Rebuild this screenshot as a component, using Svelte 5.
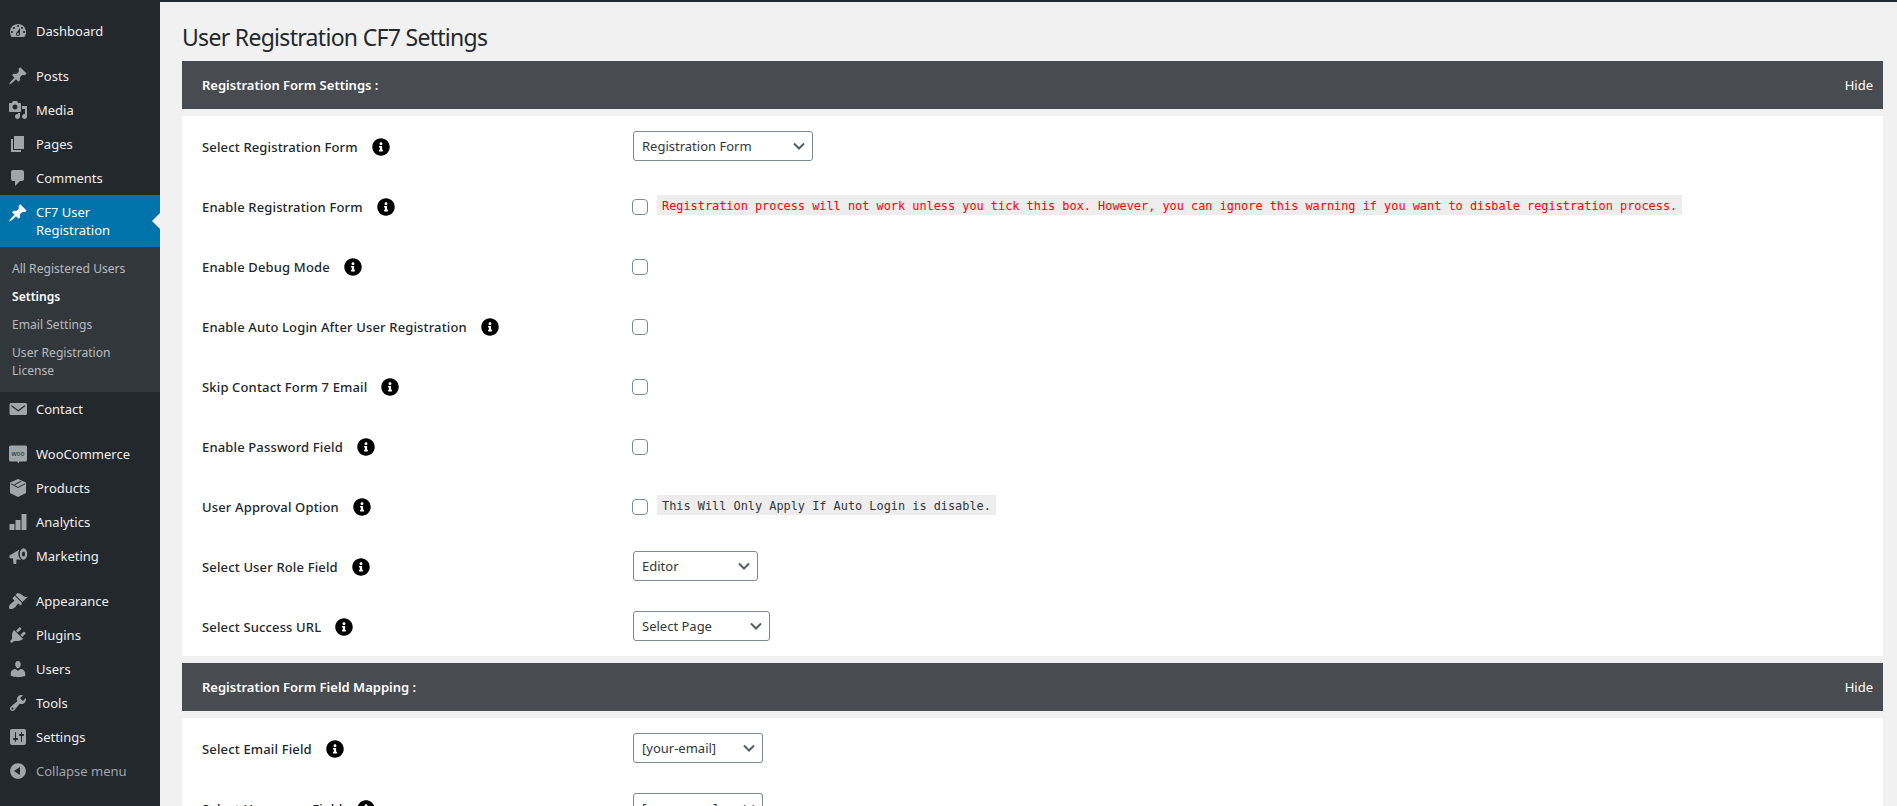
<script>
	const pin = 'M10.44 3.02l1.82-1.82 6.36 6.35-1.83 1.82c-1.05-.68-2.48-.57-3.41.36l-.75.75c-.92.93-1.04 2.35-.35 3.41l-1.83 1.82-2.41-2.41-2.8 2.79c-.42.42-3.38 2.71-3.8 2.29s1.86-3.39 2.28-3.81l2.79-2.79L4.1 9.36l1.83-1.82c1.05.69 2.48.57 3.4-.36l.75-.75c.93-.92 1.05-2.35.36-3.41z'
	const icons = {
		dashboard: 'M3.76 16h12.48c1.1-1.37 1.76-3.11 1.76-5 0-4.42-3.58-8-8-8s-8 3.58-8 8c0 1.89.66 3.63 1.76 5zM10 4c.55 0 1 .45 1 1s-.45 1-1 1-1-.45-1-1 .45-1 1-1zM6 6c.55 0 1 .45 1 1s-.45 1-1 1-1-.45-1-1 .45-1 1-1zm8 0c.55 0 1 .45 1 1s-.45 1-1 1-1-.45-1-1 .45-1 1-1zm-5.37 5.55L12 7v6c0 1.1-.9 2-2 2s-2-.9-2-2c0-.57.24-1.08.63-1.45zM4 10c.55 0 1 .45 1 1s-.45 1-1 1-1-.45-1-1 .45-1 1-1zm12 0c.55 0 1 .45 1 1s-.45 1-1 1-1-.45-1-1 .45-1 1-1zm-5 3c0-.55-.45-1-1-1s-1 .45-1 1 .45 1 1 1 1-.45 1-1z',
		pin,
		media: 'M13 11V4c0-.55-.45-1-1-1h-1.67L9 1H5L3.67 3H2c-.55 0-1 .45-1 1v7c0 .55.45 1 1 1h10c.55 0 1-.45 1-1zM7 4.5c1.38 0 2.5 1.12 2.5 2.5S8.38 9.5 7 9.5 4.5 8.38 4.5 7 5.62 4.5 7 4.5zM14 6h5v10.5c0 1.38-1.12 2.5-2.5 2.5S14 17.88 14 16.5s1.12-2.5 2.5-2.5c.17 0 .34.02.5.05V9h-3V6zm-4 8.05V13h2v3.5c0 1.38-1.12 2.5-2.5 2.5S7 17.88 7 16.5 8.12 14 9.5 14c.17 0 .34.02.5.05z',
		page: 'M6 15V2h10v13H6zm-1 1h8v2H3V5h2v11z',
		comments: 'M5 2h9c1.1 0 2 .9 2 2v7c0 1.1-.9 2-2 2h-2l-5 5v-5H5c-1.1 0-2-.9-2-2V4c0-1.1.9-2 2-2z',
		mail: 'M3 4h14.5c.8 0 1.5.7 1.5 1.5v9c0 .8-.7 1.5-1.5 1.5H3c-.8 0-1.5-.7-1.5-1.5v-9C1.5 4.7 2.2 4 3 4zM3.5 6l6.7 5 6.8-5v1.5l-6.8 5-6.7-5z',
		products: 'M10 1l8 3.5V15l-8 4-8-4V4.5zM2.8 5.3L10 9l7.2-3.7v.9L10 10 2.8 6.2zM12.5 3.1L6 6.4l1.1.5 6.5-3.3z',
		analytics: 'M1.5 12h5v6h-5zM7.5 8h5v10h-5zM13.5 2h5v16h-5z',
		marketing: 'M1.5 9.5L11.5 3.5C10.5 5 10 7 10.5 9.5c.4 2 1.4 3.5 2.7 4.3L8.500 13.500 8.2 18H5.5L5 12.500 2.5 12.200C1.5 12 1 11 1.5 9.5zM15.5 2.3a3.7 5.7 0 0 1 0 11.4a3.7 5.7 0 0 1 0-11.4zM15.5 5.5a1.6 2.5 0 0 0 0 5a1.6 2.5 0 0 0 0-5z',
		brush: 'M14.48 11.06L7.41 3.99l1.5-1.5c.5-.56 2.3-.47 3.51.32 1.21.8 1.43 1.28 2.91 2.1 1.18.64 2.45 1.26 4.45.85zm-.71.71L6.7 4.7 4.93 6.47c-.39.39-.39 1.02 0 1.41l1.06 1.06c.39.39.39 1.03 0 1.42-.6.6-1.43 1.11-2.21 1.69-.35.26-.7.53-1.01.84C1.43 13.23.99 15.02 1 16.5c0 .91.39 1.5 1.5 1.5 1.48.01 3.27-.43 4.61-1.77.31-.31.58-.66.84-1.01.58-.78 1.09-1.61 1.69-2.21.39-.39 1.03-.39 1.42 0l1.06 1.06c.39.39 1.02.39 1.41 0z',
		plugins: 'M13.11 4.36L9.87 7.6 8 5.73l3.24-3.24c.35-.34 1.05-.2 1.56.32.52.51.66 1.21.31 1.55zm-8 1.77l.91-1.12 9.01 9.01-1.19.84c-.71.71-2.63 1.16-3.82 1.16H6.14L4.9 17.26c-.59.59-1.54.59-2.12 0-.59-.58-.59-1.53 0-2.12l1.24-1.24v-3.88c0-1.13.4-3.19 1.09-3.89zm7.26 3.97l3.24-3.24c.34-.35 1.04-.21 1.55.31.52.51.66 1.21.31 1.55l-3.24 3.25z',
		users: 'M10 9.25c-2.27 0-2.73-3.44-2.73-3.44C7 4.02 7.82 2 9.97 2c2.16 0 2.98 2.02 2.71 3.81 0 0-.41 3.44-2.68 3.44zm0 2.57L12.72 10c2.39 0 4.52 2.33 4.52 4.53v2.49s-3.65 1.13-7.24 1.13c-3.65 0-7.24-1.13-7.24-1.13v-2.49c0-2.25 1.94-4.48 4.47-4.48z',
		tools: 'M16.68 9.77c-1.34 1.34-3.3 1.67-4.95.99l-5.41 6.52c-.99.99-2.59.99-3.58 0s-.99-2.59 0-3.57l6.52-5.42c-.68-1.65-.35-3.61.99-4.95 1.28-1.28 3.12-1.62 4.72-1.06l-2.89 2.89 2.82 2.82 2.86-2.87c.53 1.58.18 3.39-1.08 4.65zM3.81 16.21c.4.39 1.04.39 1.43 0 .4-.4.4-1.04 0-1.43-.39-.4-1.03-.4-1.43 0-.39.39-.39 1.03 0 1.43z',
		settings: 'M18 16V4c0-1.1-.9-2-2-2H4c-1.1 0-2 .9-2 2v12c0 1.1.9 2 2 2h12c1.1 0 2-.9 2-2zM8 11h1c.55 0 1 .45 1 1s-.45 1-1 1H8v1.5c0 .28-.22.5-.5.5s-.5-.22-.5-.5V13H6c-.55 0-1-.45-1-1s.45-1 1-1h1V5.5c0-.28.22-.5.5-.5s.5.22.5.5V11zm5-2h-1c-.55 0-1-.45-1-1s.45-1 1-1h1V5.5c0-.28.22-.5.5-.5s.5.22.5.5V7h1c.55 0 1 .45 1 1s-.45 1-1 1h-1v5.5c0 .28-.22.5-.5.5s-.5-.22-.5-.5V9z',
		collapse: 'M10 2.16c4.33 0 7.84 3.51 7.84 7.84s-3.51 7.84-7.84 7.84S2.16 14.33 2.16 10 5.67 2.16 10 2.16zM12 14V6l-6 4z'
	}
	const info = 'M256 8C119.043 8 8 119.083 8 256c0 136.997 111.043 248 248 248s248-111.003 248-248C504 119.083 392.957 8 256 8zm0 110c23.196 0 42 18.804 42 42s-18.804 42-42 42-42-18.804-42-42 18.804-42 42-42zm56 254c0 6.627-5.373 12-12 12h-88c-6.627 0-12-5.373-12-12v-24c0-6.627 5.373-12 12-12h12v-64h-12c-6.627 0-12-5.373-12-12v-24c0-6.627 5.373-12 12-12h64c6.627 0 12 5.373 12 12v100h12c6.627 0 12 5.373 12 12v24z'

	const menuTop = [{ name: 'Dashboard', icon: 'dashboard' }]
	const menuA = [
		{ name: 'Posts', icon: 'pin' },
		{ name: 'Media', icon: 'media' },
		{ name: 'Pages', icon: 'page' },
		{ name: 'Comments', icon: 'comments' }
	]
	const subItems = ['All Registered Users', 'Settings', 'Email Settings', 'User Registration License']
	const menuB = [
		{ name: 'WooCommerce', icon: 'woo' },
		{ name: 'Products', icon: 'products' },
		{ name: 'Analytics', icon: 'analytics' },
		{ name: 'Marketing', icon: 'marketing' }
	]
	const menuC = [
		{ name: 'Appearance', icon: 'brush' },
		{ name: 'Plugins', icon: 'plugins' },
		{ name: 'Users', icon: 'users' },
		{ name: 'Tools', icon: 'tools' },
		{ name: 'Settings', icon: 'settings' }
	]

	const formRows = [
		{ label: 'Select Registration Form', select: 'Registration Form', width: 180 },
		{ label: 'Enable Registration Form', check: true, note: 'Registration process will not work unless you tick this box. However, you can ignore this warning if you want to disbale registration process.', red: true },
		{ label: 'Enable Debug Mode', check: true },
		{ label: 'Enable Auto Login After User Registration', check: true },
		{ label: 'Skip Contact Form 7 Email', check: true },
		{ label: 'Enable Password Field', check: true },
		{ label: 'User Approval Option', check: true, note: 'This Will Only Apply If Auto Login is disable.' },
		{ label: 'Select User Role Field', select: 'Editor', width: 125 },
		{ label: 'Select Success URL', select: 'Select Page', width: 137 }
	]
	const mapRows = [
		{ label: 'Select Email Field', select: '[your-email]', width: 130 },
		{ label: 'Select Username Field', select: '[your-name]', width: 130 }
	]
</script>

{#snippet icon(name)}
	{#if name === 'woo'}
		<svg class="ico" viewBox="0 0 20 20">
			<path d="M2.5 1.5h15A1.5 1.5 0 0 1 19 3v13a1.5 1.5 0 0 1-1.5 1.5h-6l-1 2-1-2h-7A1.5 1.5 0 0 1 1 16V3a1.5 1.5 0 0 1 1.5-1.5z" />
			<text x="10" y="11.5" class="woo">woo</text>
		</svg>
	{:else}
		<svg class="ico" viewBox="0 0 20 20"><path d={icons[name]} fill-rule="evenodd" /></svg>
	{/if}
{/snippet}

{#snippet item(m)}
	<a class="item" href="#top">
		{@render icon(m.icon)}
		<span>{m.name}</span>
	</a>
{/snippet}

{#snippet row(r)}
	<div class="row">
		<div class="label">
			<span>{r.label}</span>
			<svg class="info" viewBox="0 0 512 512"><path d={info} /></svg>
		</div>
		<div class="field">
			{#if r.select}
				<div class="select" style="width: {r.width}px">
					<span>{r.select}</span>
					<svg viewBox="0 0 16 16"><path d="M3 5.5l5 5 5-5" /></svg>
				</div>
			{/if}
			{#if r.check}
				<span class="check"></span>
			{/if}
			{#if r.note}
				<code class:red={r.red}>{r.note}</code>
			{/if}
		</div>
	</div>
{/snippet}

<div class="page">
	<nav class="side">
		<div class="group">
			{#each menuTop as m}{@render item(m)}{/each}
		</div>
		<div class="group">
			{#each menuA as m}{@render item(m)}{/each}
			<a class="item current" href="#top">
				{@render icon('pin')}
				<span>CF7 User Registration</span>
			</a>
			<ul class="sub">
				{#each subItems as s, i}
					<li class:on={i === 1}>{s}</li>
				{/each}
			</ul>
			<a class="item" href="#top">
				{@render icon('mail')}
				<span>Contact</span>
			</a>
		</div>
		<div class="group">
			{#each menuB as m}{@render item(m)}{/each}
		</div>
		<div class="group">
			{#each menuC as m}{@render item(m)}{/each}
			<div class="item collapse">
				{@render icon('collapse')}
				<span>Collapse menu</span>
			</div>
		</div>
	</nav>

	<main>
		<h1>User Registration CF7 Settings</h1>

		<div class="bar"><strong>Registration Form Settings :</strong><span>Hide</span></div>
		<section class="panel">
			{#each formRows as r}{@render row(r)}{/each}
		</section>

		<div class="bar"><strong>Registration Form Field Mapping :</strong><span>Hide</span></div>
		<section class="panel">
			{#each mapRows as r}{@render row(r)}{/each}
		</section>
	</main>
</div>

<style>
	:global(body) {
		margin: 0;
		background: #f1f1f1;
		overflow: hidden;
	}

	.page {
		display: flex;
		height: 806px;
		overflow: hidden;
		border-top: 2px solid #23282d;
		box-sizing: border-box;
		font-family: "Noto Sans", "Open Sans", sans-serif;
		font-size: 13px;
		color: #23282d;
	}

	.side {
		width: 160px;
		flex: none;
		background: #23282d;
		padding-top: 12px;
		box-sizing: border-box;
		display: flex;
		flex-direction: column;
		gap: 11px;
	}

	.item {
		display: flex;
		align-items: center;
		min-height: 34px;
		box-sizing: border-box;
		padding-left: 8px;
		color: #eee;
		text-decoration: none;
		line-height: 18px;
		position: relative;
	}
	.item span {
		margin-left: 8px;
		width: 110px;
	}

	.ico {
		width: 20px;
		height: 20px;
		flex: none;
		fill: #a0a5aa;
	}
	.woo {
		font-size: 6.5px;
		font-family: "Noto Sans", sans-serif;
		text-anchor: middle;
		fill: #23282d;
	}

	.current {
		background: #0073aa;
		color: #fff;
		padding-top: 8px;
		padding-bottom: 8px;
	}
	.current .ico {
		fill: #fff;
		align-self: flex-start;
	}
	.current::after {
		content: '';
		position: absolute;
		right: 0;
		top: 50%;
		margin-top: -8px;
		border: 8px solid transparent;
		border-right-color: #f1f1f1;
		border-left-width: 0;
	}

	.sub {
		list-style: none;
		margin: 0;
		padding: 8px 0 7px;
		background: #32373c;
		color: rgba(240, 245, 250, 0.7);
		font-size: 12.1px;
		line-height: 18px;
	}
	.sub li {
		padding: 5px 12px;
	}
	.sub li.on {
		color: #fff;
		font-weight: 600;
	}

	.collapse {
		color: #a0a5aa;
	}

	main {
		flex: 1;
		min-width: 0;
		padding: 0 14px 0 22px;
	}

	h1 {
		margin: 0;
		padding: 21px 0 9px;
		font-size: 23px;
		font-weight: 400;
		line-height: 29px;
		letter-spacing: -0.7px;
		color: #23282d;
	}

	.bar {
		display: flex;
		justify-content: space-between;
		align-items: center;
		height: 48px;
		padding: 0 10px 0 20px;
		margin-bottom: 7px;
		background: #484b50;
		color: #fff;
	}
	.bar strong {
		font-weight: 600;
	}

	.panel {
		background: #fff;
		margin-bottom: 7px;
	}

	.row {
		display: flex;
		align-items: center;
		height: 60px;
		padding-left: 20px;
	}

	.label {
		width: 431px;
		flex: none;
		display: flex;
		align-items: center;
		gap: 14px;
		padding-top: 2px;
		font-weight: 500;
		letter-spacing: 0.15px;
	}

	.info {
		width: 18px;
		height: 18px;
		fill: #000;
	}

	.field {
		display: flex;
		align-items: center;
	}

	.select {
		display: flex;
		justify-content: space-between;
		align-items: center;
		height: 30px;
		box-sizing: border-box;
		padding: 0 5px 0 8px;
		border: 1px solid #7e8993;
		border-radius: 3px;
		background: #fff;
		color: #32373c;
		font-size: 13px;
	}
	.select svg {
		width: 16px;
		height: 16px;
		fill: none;
		stroke: #555d66;
		stroke-width: 2;
	}

	.check {
		width: 16px;
		height: 16px;
		box-sizing: border-box;
		margin: 2px 0 0 -1px;
		border: 1px solid #7e8993;
		border-radius: 4px;
		background: #fff;
	}

	code {
		margin-left: 9px;
		padding: 4px 5px 1px;
		background: #ededed;
		font-family: "DejaVu Sans Mono", "Liberation Mono", monospace;
		font-size: 11.88px;
		line-height: 15px;
		white-space: nowrap;
		position: relative;
		top: -1px;
		color: #32373c;
	}
	code.red {
		color: #ff0000;
	}
</style>
